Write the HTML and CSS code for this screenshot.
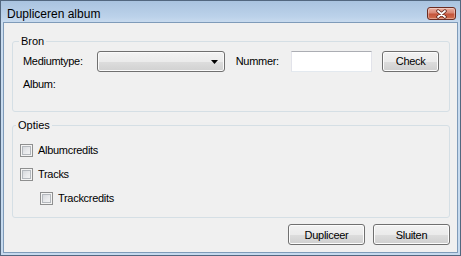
FILE: index.html
```html
<!DOCTYPE html>
<html lang="nl">
<head>
  <meta charset="UTF-8" />
  <title>Dupliceren album</title>
  <link rel="stylesheet" href="styles.css">
</head>
<body>
  <div class="window">
    <div class="titlebar">
      <span class="title">Dupliceren album</span>
      <button class="close-btn" title="Sluiten">
        <svg width="13" height="10" viewBox="0 0 13 10">
          <path d="M3 2 L10 8 M10 2 L3 8" stroke="#5a2218" stroke-width="3.4" stroke-linecap="round" />
          <path d="M3 2 L10 8 M10 2 L3 8" stroke="#ffffff" stroke-width="1.8" stroke-linecap="round" />
        </svg>
      </button>
    </div>

    <div class="client">
      <fieldset class="group group-bron">
        <legend>Bron</legend>
        <div class="row">
          <label class="lbl lbl-medium">Mediumtype:</label>
          <div class="combo">
            <svg class="combo-arrow" width="7" height="4" viewBox="0 0 7 4"><polygon points="0,0 7,0 3.5,4" fill="#000" /></svg>
          </div>
          <label class="lbl lbl-nummer">Nummer:</label>
          <input type="text" class="textbox" />
          <button class="btn btn-check">Check</button>
        </div>
        <div class="lbl album">Album:</div>
      </fieldset>

      <fieldset class="group group-opties">
        <legend>Opties</legend>
        <label class="check"><span class="box"></span>Albumcredits</label>
        <label class="check"><span class="box"></span>Tracks</label>
        <label class="check check-sub"><span class="box"></span>Trackcredits</label>
      </fieldset>

      <div class="actions">
        <button class="btn btn-wide">Dupliceer</button>
        <button class="btn btn-wide">Sluiten</button>
      </div>
    </div>
  </div>
</body>
</html>
```

FILE: styles.css
```css
body {
  margin: 0;
  font-family: "Liberation Sans", Arial, sans-serif;
  font-size: 11px;
  color: #000;
}

.window {
  width: 461px;
  height: 256px;
  box-sizing: border-box;
  border: 1px solid #52677f;
  padding: 0 2px 2px 2px;
  background: linear-gradient(to bottom, #a9c3df 0, #bcd2ea 16px, #cadcef 22px, #c6daee 100%);
  display: flex;
  flex-direction: column;
}

.titlebar {
  height: 21px;
  flex: none;
  display: flex;
  justify-content: space-between;
  align-items: flex-start;
}

.title {
  font-size: 12px;
  line-height: 14px;
  padding: 6px 0 0 4px;
}

.close-btn {
  width: 29px;
  height: 13px;
  margin: 6px 2px 0 0;
  padding: 0;
  border: 1px solid #6b2c22;
  border-radius: 3px;
  background: linear-gradient(to bottom, #eab0a1 0%, #d98672 45%, #c4543b 55%, #d2704f 100%);
  box-shadow: inset 0 0 0 1px rgba(255, 255, 255, 0.35);
  display: flex;
  align-items: center;
  justify-content: center;
}

.client {
  flex: 1;
  border: 1px solid #7f9bb9;
  background: #f0f0f0;
  display: flex;
  flex-direction: column;
}

.group {
  border: 1px solid #d5dfe5;
  border-radius: 3px;
  min-width: 0;
}

.group legend {
  margin-left: -4px;
  padding: 0 2px;
  line-height: 13px;
}

.group-bron {
  margin: 12px 7px 0 8px;
  padding: 3px 10px 20px 10px;
}

.group-opties {
  margin: 7px 7px 0 8px;
  padding: 12px 7px 12px 7px;
  display: flex;
  flex-direction: column;
  gap: 11px;
}

.lbl {
  line-height: 13px;
  letter-spacing: -0.3px;
}

.row {
  display: flex;
  align-items: center;
  height: 21px;
}

.lbl-medium {
  width: 74px;
}

.lbl-nummer {
  width: 56px;
  margin-left: 11px;
}

.combo {
  width: 129px;
  height: 21px;
  box-sizing: border-box;
  border: 1px solid #707070;
  border-radius: 3px;
  background: linear-gradient(to bottom, #f3f3f3 0%, #ebebeb 50%, #dddddd 51%, #d1d1d1 100%);
  box-shadow: inset 0 0 0 1px #fafafa;
  display: flex;
  align-items: center;
  justify-content: flex-end;
  padding-right: 6px;
}

.textbox {
  width: 81px;
  height: 21px;
  margin: 0;
  box-sizing: border-box;
  border: 1px solid #e2e3ea;
  border-top-color: #abadb3;
  border-bottom-color: #e3e9ef;
  background: #fff;
  padding: 0 2px;
  outline: none;
}

.btn {
  height: 21px;
  box-sizing: border-box;
  padding: 0;
  border: 1px solid #707070;
  border-radius: 3px;
  background: linear-gradient(to bottom, #f2f2f2 0%, #ebebeb 50%, #dddddd 51%, #cfcfcf 100%);
  box-shadow: inset 0 0 0 1px #fcfcfc;
  font-family: "Liberation Sans", Arial, sans-serif;
  font-size: 11px;
  letter-spacing: -0.3px;
  color: #000;
}

.btn-check {
  width: 57px;
  margin: -1px 0 0 10px;
}

.album {
  margin-top: 6px;
}

.check {
  display: flex;
  align-items: center;
  height: 13px;
  line-height: 13px;
  letter-spacing: -0.3px;
}

.check-sub {
  margin-left: 20px;
}

.box {
  width: 13px;
  height: 13px;
  box-sizing: border-box;
  margin-right: 5px;
  border: 1px solid #8e8f8f;
  background: linear-gradient(135deg, #cdd1d6 0%, #e9eaec 55%, #f8f8f8 100%);
  box-shadow: inset 0 0 0 1px #f4f4f4, inset 0 0 0 2px #b4b8bd;
}

.actions {
  margin: 6px 7px 0 0;
  display: flex;
  justify-content: flex-end;
  gap: 8px;
}

.btn-wide {
  width: 77px;
}
```
